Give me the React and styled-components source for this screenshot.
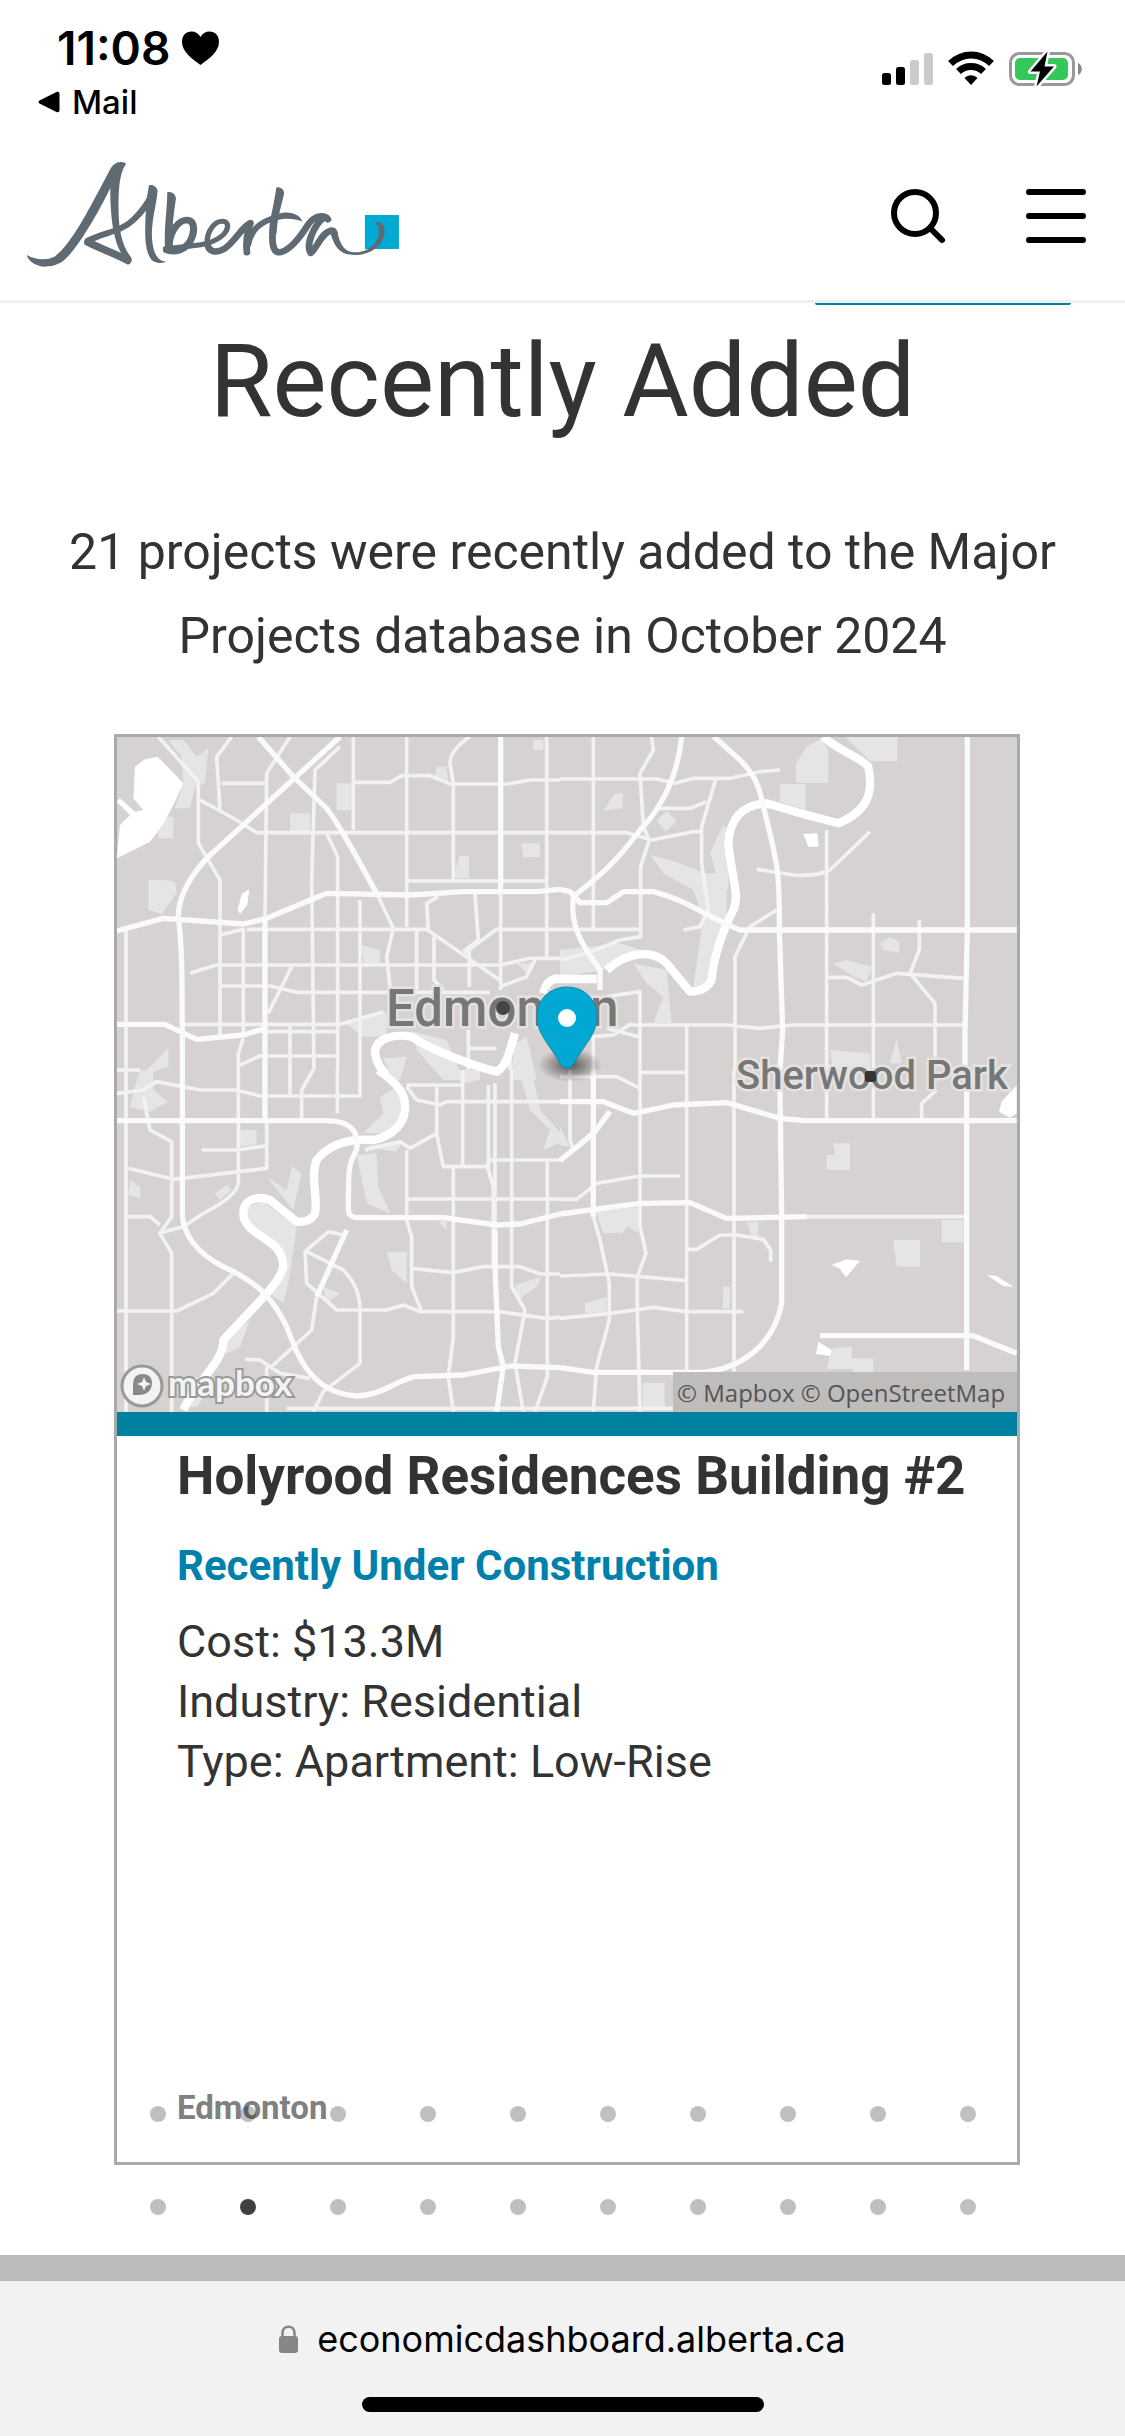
import React from 'react'
import styled, { createGlobalStyle } from 'styled-components'

const DOTS = Array.from({ length: 10 }, (_, i) => i)

export default function App() {
  return (
    <>
      <GlobalStyle />
      <PageStyle>
        <StatusBar />
        <Header />
        <main>
          <TopButton href="#top" aria-label="Back to top" />
          <Title>Recently Added</Title>
          <Intro>21 projects were recently added to the Major Projects database in October 2024</Intro>
          <Carousel>
            <ProjectCard />
            <DotList $over>
              {DOTS.map((i) => (
                <li key={i}><Dot aria-label={`Project ${i + 1}`} /></li>
              ))}
            </DotList>
          </Carousel>
          <DotList>
            {DOTS.map((i) => (
              <li key={i}><Dot $active={i === 1} aria-label={`Project ${i + 11}`} /></li>
            ))}
          </DotList>
        </main>
        <Divider />
        <AddressBar />
      </PageStyle>
    </>
  )
}

function StatusBar() {
  return (
    <StatusStyle>
      <div>
        <Clock>
          11:08
          <svg width="37" height="34" viewBox="0 0 37 34" aria-hidden="true">
            <path d="M18.5 34C11 28.500 0 21 0 11C0 4.500 4 0.500 9.500 0.500C13.500 0.500 16.700 2.500 18.500 6C20.300 2.500 23.500 0.500 27.500 0.500C33 0.500 37 4.500 37 11C37 21 26 28.500 18.500 34Z" />
          </svg>
        </Clock>
        <BackLink href="#mail">
          <svg width="22" height="22" viewBox="0 0 22 22" aria-hidden="true">
            <path d="M1.500 9.500L19 0.800Q21.500 0.200 21.500 3V19Q21.500 21.800 19 21.200L1.500 12.500Q-0.500 11 1.500 9.500Z" />
          </svg>
          Mail
        </BackLink>
      </div>
      <svg width="202" height="38" viewBox="0 0 202 38" aria-hidden="true">
        <rect x="2" y="23" width="9" height="12" rx="2.500" />
        <rect x="16" y="17" width="9" height="18" rx="2.500" />
        <rect x="30" y="10" width="9" height="25" rx="2.500" fill="#cbcbcb" />
        <rect x="44" y="3" width="9" height="32" rx="2.500" fill="#cbcbcb" />
        <g fill="none" stroke="#000" strokeWidth="7">
          <path d="M70.500 13.500C82.500 2 100 2 111.500 13.500" />
          <path d="M78.500 21.500C85.500 14.800 96.500 14.800 103.500 21.500" />
        </g>
        <path d="M84.500 28C88.500 24.200 93.500 24.200 97.500 28L91 35Z" />
        <rect x="130.500" y="3.500" width="63" height="31" rx="9" fill="none" stroke="#999" strokeWidth="3" />
        <rect x="135" y="8" width="53" height="22" rx="5" fill="#35c759" />
        <path d="M198 13C203 15 203 23 198 25Z" fill="#888" />
        <path d="M167.500 1.500L150.500 21.500H160L156.500 36.500L174 16.500H164.500Z" stroke="#fff" strokeWidth="5" strokeLinejoin="round" />
        <path d="M167.500 1.500L150.500 21.500H160L156.500 36.500L174 16.500H164.500Z" />
      </svg>
    </StatusStyle>
  )
}

function Header() {
  return (
    <HeaderStyle>
      <LogoLink href="#home" aria-label="Alberta">
        <AlbertaLogo />
      </LogoLink>
      <HeaderButtons>
        <IconButton aria-label="Search">
          <svg width="60" height="60" viewBox="0 0 60 60" fill="none" stroke="#000" strokeWidth="6" strokeLinecap="round">
            <circle cx="27" cy="27" r="21" />
            <path d="M43 43L54 54" />
          </svg>
        </IconButton>
        <IconButton aria-label="Menu">
          <svg width="60" height="60" viewBox="0 0 60 60" stroke="#000" strokeWidth="6" strokeLinecap="round">
            <path d="M3 6H57M3 30H57M3 54H57" />
          </svg>
        </IconButton>
      </HeaderButtons>
    </HeaderStyle>
  )
}

function AlbertaLogo() {
  return (
    <svg width="374" height="108" viewBox="73 480 1043 324" preserveAspectRatio="none" aria-hidden="true">
      <rect x="1018" y="645" width="95" height="102" fill="#00aad2" />
      <g fill="#5f6a72">
        <path d="M75 765C95 779 132 782 152 770C200 735 252 620 302 520C313 495 322 486 338 486C346 486 353 489 351 494C340 505 325 535 309 562C270 650 215 745 185 775C165 797 140 800 122 800C100 798 78 782 75 765Z" />
        <path d="M308 545L351 494C333 520 331 570 331 620C331 690 340 735 366 772C371 784 362 796 354 793L343 768C318 725 308 660 308 560Z" />
        <path d="M416 556C425 552 438 560 440 572C436 620 425 650 424 700C424 745 435 784 462 784C460 792 428 792 420 775C400 740 405 680 409 600Z" />
        <path d="M467 577C478 572 492 582 491 597C485 640 480 680 481 738L461 745C457 690 466 640 467 577Z" />
        <path d="M771 563C780 559 793 568 793 580C785 620 774 650 772 700L751 700C751 660 764 620 771 563Z" />
        <path d="M773 643C805 630 838 642 843 665C820 654 795 654 768 661Z" />
        <path d="M1047 668C1058 662 1073 672 1073 692C1072 735 1035 765 990 765C950 765 935 745 922 700L940 692C950 735 960 757 992 757C1030 757 1060 725 1057 690Q1055 677 1047 668Z" />
      </g>
      <g fill="none" stroke="#5f6a72" strokeLinecap="round" strokeLinejoin="round">
        <path d="M356 781C320 760 285 748 246 727" strokeWidth="22" />
        <path d="M246 722C290 696 335 698 372 660C395 637 412 612 424 585" strokeWidth="18" />
        <path d="M472 735C475 690 500 660 523 660C547 663 543 700 530 725C515 752 485 758 465 750" strokeWidth="20" />
        <path d="M462 746C500 741 530 739 560 734C600 728 632 705 635 681C638 658 608 658 593 680C572 710 572 756 605 755" strokeWidth="15" />
        <path d="M579 732C582 755 602 761 625 747C655 727 675 680 699 669C690 695 686 725 689 757" strokeWidth="19" />
        <path d="M692 735C700 690 725 665 775 650" strokeWidth="17" />
        <path d="M761 700C758 735 764 763 785 756C820 745 850 690 862 670C880 647 905 642 915 658" strokeWidth="19" />
        <path d="M905 652C877 672 852 735 867 759C885 745 895 700 923 692C931 690 932 695 934 703" strokeWidth="19" />
      </g>
    </svg>
  )
}

function ProjectCard() {
  return (
    <CardStyle>
      <MapPicture />
      <CardBody>
        <h2>Holyrood Residences Building #2</h2>
        <Stage>Recently Under Construction</Stage>
        <Facts>
          <li>Cost: $13.3M</li>
          <li>Industry: Residential</li>
          <li>Type: Apartment: Low-Rise</li>
        </Facts>
        <Place>Edmonton</Place>
      </CardBody>
    </CardStyle>
  )
}

// The map is drawn as four tiles: nw, ne, sw, se.
const TILES = [
  {
    at: '-21 -21',
    parks: 'M175 30L220 30L260 80L295 55L285 160L255 170L240 235H195L220 160L215 80ZM115 450H165L195 455L200 490L155 552L115 540ZM680 160H725V240H680ZM540 250H600V305H540ZM145 260H190V325H145ZM980 110H1010L1015 155L975 140ZM1235 340H1290V382H1240ZM1048 378H1077V445H1030ZM755 645L810 660V700H760ZM700 875L830 845V920H760ZM910 905L1010 930L1060 1050H1000L920 960ZM820 985L890 980L870 1050H850ZM1220 700H1275L1255 735ZM1215 940L1250 920L1280 1050H1200ZM1270 30H1300V60H1270ZM90 1040L175 955V1010Z',
    lakes: 'M143 80L220 160C190 230 160 290 120 335L20 385L30 285L60 255L20 215L30 205L75 245L100 240L70 205L75 110L105 88ZM395 492L418 478L412 525L390 552L383 540Z',
    major: 'M690 20L290 385C240 440 205 500 205 560C215 640 217 700 217 1020M445 20L550 140L650 235C700 300 760 420 800 490M20 603L160 565L400 582L470 565L650 490L900 495L1060 485H1280L1350 478M20 883H165L260 928L400 915L465 895M465 560V1020M1172 20V480',
    river: 'M1215 910C1200 960 1190 1010 1160 1025C1100 1010 960 960 905 920C850 910 795 925 795 970Q800 1005 830 1035M1300 790Q1310 747 1345 745',
    minor: 'M145 20L265 155V340L330 450V915M365 20L320 80L330 240M335 160H465M540 20L470 130L465 560M690 50L615 120L605 450L612 1020M730 20V300M730 157H840L875 137H960L1020 162H1190L1260 150H1350M890 20V590M1310 20V690M1080 20Q1020 60 1020 100L1030 160V450M270 210L380 270L440 308H1350M650 310L683 380V1020M890 453H1315M800 490L850 595L830 680L840 770M410 598H950L1172 752M985 500L950 520L955 600M1095 490L1105 630L1060 665M1350 598H1160L1065 668M330 615L400 598V910M240 730L320 705H1172L1260 685H1350M330 768H480L560 787H1140M545 710L475 850M750 510V1020M920 600V780M972 620V750L1000 780M1078 660V770M1172 490V780M48 590V1020M220 883H690L820 845M465 905H685M380 1010L450 978H685M400 925L385 970V1020M540 880V1020M1075 955H1160M1075 900V1020M1170 770L1250 740L1275 690M20 1020H90M1200 930V1020',
  },
  {
    at: '1329 -21',
    parks: 'M855 20H1012V93H930ZM740 50L785 25L805 60V158H708V100ZM660 162H737V240L660 215ZM165 190H188V235L130 242ZM320 243L350 272L318 305L290 272ZM270 375L330 390L440 430L500 430V580L450 700L440 780L400 770L430 560L400 480L310 430ZM490 285L505 300V480H485L450 370ZM960 640L990 620L1018 635V668L970 660ZM820 700L860 690L935 710L920 755L880 740ZM0 660L180 640L240 660L130 720L0 740ZM220 700L320 720L335 880H280L310 800L260 760ZM810 960L930 970V1020H820ZM1010 925L1025 1000H990Z',
    lakes: 'M730 312L772 310L776 350H745Z',
    major: 'M462 20L540 90C600 150 600 190 620 270C650 390 660 430 658 600L668 900L660 1020M0 478L30 485L60 518H140L190 485H280C380 510 440 560 540 600H1370M365 20C350 170 280 260 240 300C150 420 100 450 40 500C30 580 60 640 120 720V780M1222 20V600L1215 900V1020',
    river: 'M790 20C830 60 900 80 925 110C940 180 930 240 835 280L740 255L620 220C540 225 510 270 505 340C515 440 540 500 520 540C480 620 460 690 455 750C440 780 410 785 390 785L320 700C280 660 210 660 140 720M-20 747H110',
    minor: 'M100 20V600M275 20L280 60L240 130L250 290L268 330L242 410V620L180 630L80 670L0 690M0 147H290L345 160L400 145H510L600 125L660 120M285 235H390L440 215M468 145L425 290V400L445 540L420 590L370 600M0 308H200L275 330L400 305H425M0 598H240M590 418L700 435Q770 440 810 420L930 305M800 300V1020M940 550V1020M1078 570V660L1050 730L1125 820V980M800 742H860L905 765L1010 730L1210 745M650 540L570 590L525 680V1020M200 885H500L600 895L700 885H1210M140 800L240 785V1020M380 880V1020M240 1027H380M100 920L160 915L215 880M100 915V1020M140 895L235 920',
  },
  {
    at: '-21 999',
    parks: 'M90 0L130 5L130 60L175 95L120 125L60 110L75 50ZM385 180H440V225L380 230ZM60 330L90 350V385L55 375ZM315 370L350 345L365 360L330 390ZM470 320L530 360L545 290L575 310L550 420ZM410 410L460 395L560 470L550 540L535 640L520 700L480 670L520 580L490 520L410 470ZM810 80L860 50L880 120L840 190L760 190L820 130ZM740 255L800 250L805 350L840 430L770 400ZM830 545H890V640L845 600ZM640 650L690 670L650 700ZM350 800L420 750L390 830L330 860ZM1215 645L1295 620L1280 650L1225 690ZM1225 0L1270 20L1290 120L1370 210L1300 240L1320 180L1260 120ZM1020 0H1110V30L1060 40ZM985 455L1010 450V480ZM230 920L320 930L260 1010H230ZM760 230L880 210L860 245Z',
    lakes: '',
    major: 'M217 0V430C217 490 260 550 340 590C450 640 490 690 530 770C560 850 600 970 740 978C820 975 850 935 915 920L1060 915L1200 888L1350 893M465 0V150M20 152H640C740 150 745 200 740 240C715 280 715 300 715 420Q715 440 740 443H1000L1160 465L1230 462L1350 432M1155 480V590L1165 830L1180 890L1160 1025M710 480L620 680',
    river: 'M805 0C860 40 890 70 885 120C880 180 820 205 790 210C720 205 660 220 620 270C600 320 625 380 615 430Q600 460 560 455L480 390C440 375 400 390 400 430C400 500 520 500 520 590C510 640 440 700 340 810C340 880 260 930 220 1020',
    minor: 'M48 0V1025M20 70L100 60L140 35L270 60H380L450 78H750V0M100 80L120 180L185 215V440L150 490L185 550V1025M385 0V340Q380 380 280 430L220 470L145 490M275 240H380L465 228M55 295L190 328L470 295V150M50 440H120L150 465M20 723H200L310 670L380 600M610 0L575 60V150M682 0V130M540 0V75M700 495L655 485L585 545L590 640L680 720H830L880 705L930 725H1170L1310 745L1350 742M590 545L700 600Q750 650 750 720V880L640 965L610 1025M620 680L605 780L485 890M405 868L450 870L510 910L600 925M470 890V1025M530 1015H1350M890 45H1060M890 50L920 90L990 105L1010 95H1350M980 50V190L1000 290H1130L1140 270H1350M765 240L870 215L900 235L980 190M890 240V450L905 500V650L935 725M1058 0V285M1155 40V480M1205 0V650L1245 720L1215 880L1240 1025M885 387H1350M1030 290V800L1015 920L1030 1025M1312 275V920L1275 1025M905 595L1030 608L1120 590H1230L1290 612H1350M1135 45V300L1150 350V590',
  },
  {
    at: '1329 999',
    parks: 'M0 170L30 230L0 225ZM108 425L235 410V490L205 470L185 490H130ZM75 700L140 680V725L75 730ZM490 650H510V715H488ZM560 455H595V500H575ZM820 220H870V300H800V255H825ZM1145 450H1210V517H1145ZM1000 510H1080V590H1010ZM815 835L875 830V865H940V940H880V897H800ZM248 938H314V1010H248Z',
    lakes: 'M815 585L860 568L900 572L858 622L838 595ZM775 815L815 840L810 858L768 852ZM1370 45V130L1350 143L1317 125L1325 95ZM1280 615L1310 618L1362 652L1330 648Z',
    major: 'M0 893L100 907H430C540 895 640 830 665 700V440L660 60M0 432L240 400L390 398L500 445L740 440M0 95H130L220 130L340 105L500 98L660 145L735 152H1370M780 797H1240L1370 850M100 0V440M1220 0V900M0 272L100 190L150 125',
    river: '',
    minor: 'M240 0V470L258 550L232 620V720L240 1025M380 0V905M522 0V905M30 0V210L40 240M0 388H50L110 340L240 318H360M100 440L120 510L148 640V750L110 890L100 1025M735 440H1215M385 538H410L480 495H530L610 508L632 540V575M0 618L150 612L380 632M0 745L150 730L280 712L380 725H550M800 60V150M940 50V150M1130 60L1085 100V150M0 20H170L240 55M0 1015H340',
  },
]

function MapPicture() {
  return (
    <MapSvg viewBox="0 0 900 675" role="img" aria-label="Map of Edmonton">
      <defs>
        <radialGradient id="pinShadow">
          <stop offset="0" stopColor="#000" stopOpacity=".6" />
          <stop offset="1" stopColor="#000" stopOpacity="0" />
        </radialGradient>
      </defs>
      <rect width="900" height="675" fill="#d6d2d1" />
      <g transform="scale(.33333)" fill="none" strokeLinejoin="round">
        {TILES.map((t) => (
          <g key={t.at} transform={`translate(${t.at})`}>
            <path d={t.parks} fill="#e5e5e5" />
            <path d={t.lakes} fill="#fff" />
          </g>
        ))}
        {TILES.map((t) => (
          <g key={t.at} transform={`translate(${t.at})`}>
            <path d={t.minor} stroke="#f1f2f1" strokeWidth="11" />
            <path d={t.river} stroke="#fff" strokeWidth="25" />
            <path d={t.major} stroke="#fafaf9" strokeWidth="16" />
          </g>
        ))}
      </g>
      <MapLabel x="269" y="289" $size={51}>Edmonton</MapLabel>
      <MapLabel x="619" y="352" $size={40}>Sherwood Park</MapLabel>
      <circle cx="386" cy="271" r="7" fill="#444" />
      <rect x="748" y="334" width="11" height="11" rx="3" fill="#333" />
      <ellipse cx="453" cy="328" rx="32" ry="17" fill="url(#pinShadow)" />
      <path d="M450 331C445 331 443 326 440 321C430 305 420 295 420 280C420 262 433 250 450 250C467 250 480 262 480 280C480 295 470 305 460 321C457 326 455 331 450 331Z" fill="#00a8d3" stroke="#168aaa" />
      <circle cx="450" cy="281" r="9" fill="#fff" />
      <circle cx="25" cy="649" r="20" fill="#f3f3f3" stroke="#999" strokeWidth="3" />
      <path d="M16 658V648C16 640 20 637 26 637C32 637 35 641 35 646C35 654 29 658 22 658Z" fill="#888" />
      <path d="M27 640L29 645L34 647L29 649L27 654L25 649L20 647L25 645Z" fill="#f3f3f3" />
      <Wordmark x="51" y="659">mapbox</Wordmark>
      <rect x="556" y="635" width="344" height="40" fill="#bfbcbc" />
      <Credit x="560" y="665">© Mapbox © OpenStreetMap</Credit>
    </MapSvg>
  )
}

function AddressBar() {
  return (
    <AddressStyle>
      <a href="https://economicdashboard.alberta.ca">
        <svg width="20" height="28" viewBox="0 0 20 28" aria-hidden="true">
          <rect x="0" y="11" width="19" height="17" rx="3" fill="#86858a" />
          <path d="M3.500 12V8C3.500 -0.500 15.500 -0.500 15.500 8V12" fill="none" stroke="#86858a" strokeWidth="2.500" />
        </svg>
        economicdashboard.alberta.ca
      </a>
      <HomeIndicator />
    </AddressStyle>
  )
}

const GlobalStyle = createGlobalStyle`
  * {
    box-sizing: border-box;
  }
  body {
    margin: 0;
    background: #fff;
    color: #333;
    font-family: Roboto, "Liberation Sans", sans-serif;
  }
  h1, h2, p, ul {
    margin: 0;
    padding: 0;
  }
  ul {
    list-style: none;
  }
  a {
    color: inherit;
    text-decoration: none;
  }
  svg {
    display: block;
  }
`

const PageStyle = styled.div`
  display: flex;
  flex-direction: column;
  min-height: 100vh;
`

const StatusStyle = styled.div`
  display: flex;
  justify-content: space-between;
  align-items: flex-start;
  height: 132px;
  padding: 20px 43px 0 38px;
  color: #000;
  font-family: Inter, "Liberation Sans", sans-serif;
  > svg {
    margin-top: 30px;
  }
`

const Clock = styled.div`
  display: flex;
  align-items: center;
  gap: 12px;
  height: 56px;
  padding-left: 19px;
  font-size: 46px;
  font-weight: 600;
`

const BackLink = styled.a`
  display: flex;
  align-items: center;
  gap: 12px;
  height: 52px;
  font-size: 33px;
  font-weight: 500;
`

const HeaderStyle = styled.header`
  display: flex;
  justify-content: space-between;
  align-items: center;
  height: 171px;
  padding: 0 39px 0 26px;
  border-bottom: 3px solid #f0f0f0;
`

const LogoLink = styled.a`
  padding-bottom: 4px;
`

const HeaderButtons = styled.div`
  display: flex;
  gap: 78px;
`

const IconButton = styled.button`
  padding: 0;
  border: 0;
  background: none;
`

const TopButton = styled.a`
  display: block;
  width: 256px;
  height: 2px;
  margin-left: auto;
  margin-right: 54px;
  border-radius: 0 0 8px 8px;
  background: #0081a2;
`

const Title = styled.h1`
  padding-top: 14px;
  font-size: 102px;
  font-weight: 400;
  line-height: 124px;
  text-align: center;
`

const Intro = styled.p`
  padding: 67px 60px 56px;
  font-size: 50px;
  line-height: 84px;
  text-align: center;
`

const Carousel = styled.div`
  position: relative;
  padding: 0 105px 0 114px;
`

const CardStyle = styled.article`
  border: 3px solid #aaa;
`

const MapSvg = styled.svg`
  width: 100%;
  height: auto;
  border-bottom: 24px solid #0081a2;
  box-sizing: content-box;
`

const MapLabel = styled.text`
  font-size: ${({ $size }) => $size}px;
  font-weight: 500;
  fill: #777;
  stroke: #e4e2e1;
  stroke-width: 5px;
  paint-order: stroke;
`

const Wordmark = styled.text`
  font-family: Lato, sans-serif;
  font-size: 35px;
  font-weight: 700;
  fill: #f3f3f3;
  stroke: #999;
  stroke-width: 4px;
  paint-order: stroke;
`

const Credit = styled.text`
  font-family: "Open Sans", sans-serif;
  font-size: 24px;
  fill: #555;
`

const CardBody = styled.div`
  display: flex;
  flex-direction: column;
  min-height: 726px;
  padding: 8px 20px 34px 60px;
  h2 {
    font-size: 53px;
    font-weight: 700;
    line-height: 64px;
    white-space: nowrap;
  }
`

const Stage = styled.p`
  padding-top: 30px;
  color: #0081ab;
  font-size: 42px;
  font-weight: 700;
  line-height: 56px;
`

const Facts = styled.ul`
  padding-top: 18px;
  font-size: 45px;
  line-height: 60px;
`

const Place = styled.p`
  margin-top: auto;
  color: #808080;
  font-size: 33px;
  font-weight: 700;
  line-height: 40px;
`

const DotList = styled.ul`
  display: flex;
  justify-content: center;
  padding: 34px 0 40px;
  li {
    display: flex;
    justify-content: center;
    width: 90px;
  }
  ${({ $over }) => $over && `
    position: absolute;
    left: 0;
    right: 0;
    bottom: 3px;
  `}
`

const Dot = styled.button`
  width: 16px;
  height: 16px;
  padding: 0;
  border: 0;
  border-radius: 50%;
  background: rgba(0, 0, 0, ${({ $active }) => ($active ? 0.75 : 0.25)});
`

const Divider = styled.div`
  height: 26px;
  background: #bbb;
`

const AddressStyle = styled.footer`
  display: flex;
  flex: 1;
  flex-direction: column;
  align-items: center;
  min-height: 155px;
  padding-top: 36px;
  background: #f2f2f2;
  color: #000;
  font-family: Inter, "Liberation Sans", sans-serif;
  font-size: 36px;
  line-height: 44px;
  a {
    display: flex;
    align-items: center;
    gap: 18px;
  }
`

const HomeIndicator = styled.div`
  width: 402px;
  height: 15px;
  margin-top: 36px;
  border-radius: 8px;
  background: #000;
`
